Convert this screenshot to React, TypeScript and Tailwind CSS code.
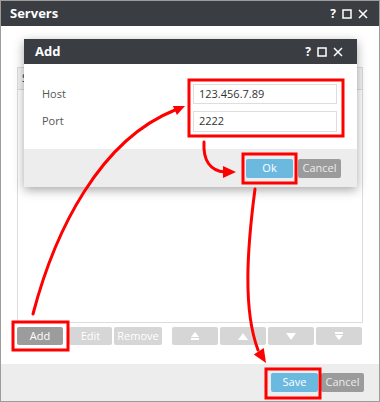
import React from "react";

const TitleIcons = () => (
  <div className="flex items-center gap-[6px] text-white">
    <span className="text-[12px] font-bold leading-none">?</span>
    <svg width="10" height="10" viewBox="0 0 10 10">
      <rect x="1" y="1" width="8" height="8" fill="none" stroke="#fff" strokeWidth="1.5" />
    </svg>
    <svg width="10" height="10" viewBox="0 0 10 10">
      <path d="M1 1 L9 9 M9 1 L1 9" stroke="#fff" strokeWidth="1.5" />
    </svg>
  </div>
);

const MoveIcon = ({ kind }: { kind: "top" | "up" | "down" | "bottom" }) => (
  <svg width="10" height="9" viewBox="0 0 10 9" fill="#fff">
    {kind === "top" && (
      <>
        <path d="M5 0 L9 5 L1 5 Z" />
        <rect x="1" y="6" width="8" height="2" />
      </>
    )}
    {kind === "up" && <path d="M5 1 L10 8 L0 8 Z" />}
    {kind === "down" && <path d="M0 1 L10 1 L5 8 Z" />}
    {kind === "bottom" && (
      <>
        <rect x="1" y="0" width="8" height="2" />
        <path d="M1 3 L9 3 L5 8 Z" />
      </>
    )}
  </svg>
);

export default function App() {
  return (
    <div className="relative w-[380px] h-[402px] overflow-hidden bg-white border border-[#9c9c9c] flex flex-col font-['Open_Sans',sans-serif]">
      {/* window title */}
      <div className="h-[25px] shrink-0 bg-[#3a3d42] flex items-center justify-between pl-[9px] pr-[11px]">
        <span className="text-white text-[13px] font-bold">Servers</span>
        <TitleIcons />
      </div>

      {/* body */}
      <div className="flex-1 flex flex-col px-[16px] pt-[41px]">
        <div className="h-[256px] border border-[#dcdcdc] bg-white">
          <div className="h-[22px] bg-[#f4f4f4] border-b border-[#dcdcdc] flex items-center pl-[4px] text-[11px] text-[#333]">
            Server
          </div>
        </div>
        <div className="mt-[4px] flex h-[18px] text-[11px] text-white">
          <button className="w-[46px] bg-[#9c9c9c] rounded-[2px]">Add</button>
          <button className="w-[43px] ml-[6px] bg-[#d6d6d6] rounded-[2px]">Edit</button>
          <button className="w-[48px] ml-[2px] bg-[#d6d6d6] rounded-[2px]">Remove</button>
          <div className="ml-[10px] flex gap-[2px]">
            <button className="w-[46px] bg-[#d6d6d6] rounded-[2px] flex items-center justify-center"><MoveIcon kind="top" /></button>
            <button className="w-[46px] bg-[#d6d6d6] rounded-[2px] flex items-center justify-center"><MoveIcon kind="up" /></button>
            <button className="w-[46px] bg-[#d6d6d6] rounded-[2px] flex items-center justify-center"><MoveIcon kind="down" /></button>
            <button className="w-[46px] bg-[#d6d6d6] rounded-[2px] flex items-center justify-center"><MoveIcon kind="bottom" /></button>
          </div>
        </div>
      </div>

      {/* window footer */}
      <div className="h-[37px] shrink-0 bg-[#ededed] flex items-center justify-end gap-[3px] pr-[15px] text-[11px]">
        <button className="w-[47px] h-[19px] bg-[#6cb9e0] text-white rounded-[2px]">Save</button>
        <button className="w-[43px] h-[19px] bg-[#9b9b9b] text-[#ececec] rounded-[2px]">Cancel</button>
      </div>

      {/* Add dialog */}
      <div className="absolute left-[23px] top-[38px] w-[333px] flex flex-col bg-white shadow-[0_3px_10px_rgba(0,0,0,0.35)]">
        <div className="h-[25px] bg-[#3a3d42] flex items-center justify-between pl-[11px] pr-[14px]">
          <span className="text-white text-[13px] font-bold">Add</span>
          <TitleIcons />
        </div>
        <div className="h-[85px] pt-[20px] flex flex-col gap-[7px] text-[11px]">
          <div className="flex items-center h-[20px]">
            <span className="w-[169px] pl-[18px] text-[#555]">Host</span>
            <div className="w-[144px] h-[20px] border border-[#dedede] flex items-center pl-[5px] text-[#333]">123.456.7.89</div>
          </div>
          <div className="flex items-center h-[21px]">
            <span className="w-[169px] pl-[18px] text-[#555]">Port</span>
            <div className="w-[144px] h-[21px] border border-[#dedede] flex items-center pl-[5px] text-[#333]">2222</div>
          </div>
        </div>
        <div className="h-[38px] bg-[#ededed] flex items-center justify-end gap-[5px] pr-[16px] text-[11px]">
          <button className="w-[47px] h-[19px] bg-[#6cb9e0] text-white rounded-[2px]">Ok</button>
          <button className="w-[43px] h-[19px] bg-[#9b9b9b] text-[#ececec] rounded-[2px]">Cancel</button>
        </div>
      </div>

      {/* annotations */}
      <svg className="absolute left-[-1px] top-[-1px] pointer-events-none" width="380" height="402" viewBox="0 0 380 402">
        <g fill="none" stroke="#ff0000" strokeWidth="3">
          <rect x="189" y="80" width="154" height="56" />
          <rect x="243" y="154" width="53" height="29" />
          <rect x="13" y="322" width="55" height="28" />
          <rect x="266" y="369" width="54" height="29" />
          <path d="M33 314 C 55 230 100 140 175 110" strokeLinecap="round" />
          <path d="M204 142 C 203 160 210 171 225 172" strokeLinecap="round" />
          <path d="M255 189 C 247 250 243 310 258 350" strokeLinecap="round" />
        </g>
        <g fill="#ff0000">
          <polygon points="185,106 176.9,115 172.9,105.9" />
          <polygon points="236,172 223,166 223,178" />
          <polygon points="266,363 263.8,347.9 253.8,354.5" />
        </g>
      </svg>
    </div>
  );
}
